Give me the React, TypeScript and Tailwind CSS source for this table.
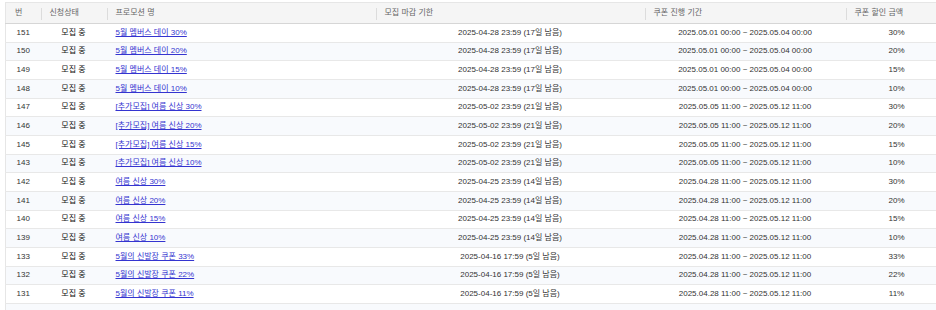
const rows = [
  { id: 151, name: "5월 멤버스 데이 30%", due: "2025-04-28 23:59 (17일 남음)", period: "2025.05.01 00:00 ~ 2025.05.04 00:00", rate: "30%" },
  { id: 150, name: "5월 멤버스 데이 20%", due: "2025-04-28 23:59 (17일 남음)", period: "2025.05.01 00:00 ~ 2025.05.04 00:00", rate: "20%" },
  { id: 149, name: "5월 멤버스 데이 15%", due: "2025-04-28 23:59 (17일 남음)", period: "2025.05.01 00:00 ~ 2025.05.04 00:00", rate: "15%" },
  { id: 148, name: "5월 멤버스 데이 10%", due: "2025-04-28 23:59 (17일 남음)", period: "2025.05.01 00:00 ~ 2025.05.04 00:00", rate: "10%" },
  { id: 147, name: "[추가모집] 여름 신상 30%", due: "2025-05-02 23:59 (21일 남음)", period: "2025.05.05 11:00 ~ 2025.05.12 11:00", rate: "30%" },
  { id: 146, name: "[추가모집] 여름 신상 20%", due: "2025-05-02 23:59 (21일 남음)", period: "2025.05.05 11:00 ~ 2025.05.12 11:00", rate: "20%" },
  { id: 145, name: "[추가모집] 여름 신상 15%", due: "2025-05-02 23:59 (21일 남음)", period: "2025.05.05 11:00 ~ 2025.05.12 11:00", rate: "15%" },
  { id: 143, name: "[추가모집] 여름 신상 10%", due: "2025-05-02 23:59 (21일 남음)", period: "2025.05.05 11:00 ~ 2025.05.12 11:00", rate: "10%" },
  { id: 142, name: "여름 신상 30%", due: "2025-04-25 23:59 (14일 남음)", period: "2025.04.28 11:00 ~ 2025.05.12 11:00", rate: "30%" },
  { id: 141, name: "여름 신상 20%", due: "2025-04-25 23:59 (14일 남음)", period: "2025.04.28 11:00 ~ 2025.05.12 11:00", rate: "20%" },
  { id: 140, name: "여름 신상 15%", due: "2025-04-25 23:59 (14일 남음)", period: "2025.04.28 11:00 ~ 2025.05.12 11:00", rate: "15%" },
  { id: 139, name: "여름 신상 10%", due: "2025-04-25 23:59 (14일 남음)", period: "2025.04.28 11:00 ~ 2025.05.12 11:00", rate: "10%" },
  { id: 133, name: "5월의 신발장 쿠폰 33%", due: "2025-04-16 17:59 (5일 남음)", period: "2025.04.28 11:00 ~ 2025.05.12 11:00", rate: "33%" },
  { id: 132, name: "5월의 신발장 쿠폰 22%", due: "2025-04-16 17:59 (5일 남음)", period: "2025.04.28 11:00 ~ 2025.05.12 11:00", rate: "22%" },
  { id: 131, name: "5월의 신발장 쿠폰 11%", due: "2025-04-16 17:59 (5일 남음)", period: "2025.04.28 11:00 ~ 2025.05.12 11:00", rate: "11%" },
];

const headers = ["번", "신청상태", "프로모션 명", "모집 마감 기한", "쿠폰 진행 기간", "쿠폰 할인 금액"];

const HeaderCell = ({ label, first }: { label: string; first?: boolean }) => (
  <th className="relative h-[21px] px-[9px] text-left font-normal text-[#666] whitespace-nowrap">
    {!first && <span className="absolute left-0 top-[5px] h-[12px] w-px bg-[#dcdcdc]" />}
    {label}
  </th>
);

export default function App() {
  return (
    <div className="h-[310px] w-[936px] overflow-hidden bg-white pt-[2px] pl-[5px]">
      <table
        className="w-[942px] table-fixed border-collapse border-l border-t border-[#e6e6e6] text-[8px] leading-none text-[#333]"
        style={{ fontFamily: '"Liberation Sans", "Noto Sans CJK KR", sans-serif' }}
      >
        <colgroup>
          <col className="w-[35px]" />
          <col className="w-[66px]" />
          <col className="w-[269px]" />
          <col className="w-[269px]" />
          <col className="w-[201px]" />
          <col className="w-[102px]" />
        </colgroup>
        <thead>
          <tr className="bg-[#f5f5f5] border-b border-[#d6d6d6]">
            {headers.map((h, i) => (
              <HeaderCell key={h} label={h} first={i === 0} />
            ))}
          </tr>
        </thead>
        <tbody>
          {rows.map((r, i) => (
            <tr
              key={r.id}
              className={`h-[18.67px] border-b border-[#e8e8e8] ${i % 2 === 1 ? "bg-[#f8fafd]" : "bg-white"}`}
            >
              <td className="text-center">{r.id}</td>
              <td className="text-center font-normal text-[#111]">모집 중</td>
              <td className="px-[9px] whitespace-nowrap">
                <a href="#" className="text-[#3434d0] underline underline-offset-[1px]">
                  {r.name}
                </a>
              </td>
              <td className="text-center whitespace-nowrap">{r.due}</td>
              <td className="text-center whitespace-nowrap">{r.period}</td>
              <td className="text-center">{r.rate}</td>
            </tr>
          ))}
          <tr className="h-[18.67px] border-b border-[#e8e8e8] bg-[#f8fafd]">
            <td colSpan={6} />
          </tr>
        </tbody>
      </table>
    </div>
  );
}
